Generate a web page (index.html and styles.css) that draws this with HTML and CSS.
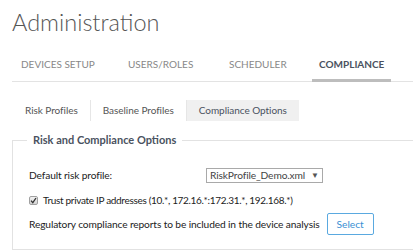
FILE: index.html
```html
<!DOCTYPE html>
<html lang="en">
<head>
    <meta charset="UTF-8">
    <title>Administration</title>
    <link rel="stylesheet" href="styles.css">
</head>
<body>
    <div class="page">
        <h1 class="page-title">Administration</h1>
        <div class="main-tabs">
            <span class="main-tab">DEVICES SETUP</span>
            <span class="main-tab">USERS/ROLES</span>
            <span class="main-tab">SCHEDULER</span>
            <span class="main-tab active">COMPLIANCE</span>
        </div>
        <div class="sub-tabs">
            <span class="sub-tab">Risk Profiles</span>
            <span class="sub-tab">Baseline Profiles</span>
            <span class="sub-tab active">Compliance Options</span>
        </div>
        <fieldset class="options">
            <legend>Risk and Compliance Options</legend>
            <div class="option-row profile-row">
                <span class="option-label">Default risk profile:</span>
                <span class="select-box">RiskProfile_Demo.xml <span class="caret">&#9660;</span></span>
            </div>
            <div class="option-row check-row">
                <span class="check-box">
                    <svg width="7" height="7" viewBox="0 0 7 7"><path d="M1 3.6 L2.8 5.6 L6 1" fill="none" stroke="#333" stroke-width="1.3"/></svg>
                </span>
                <span>Trust private IP addresses (10.*, 172.16.*:172.31.*, 192.168.*)</span>
            </div>
            <div class="option-row report-row">
                <span>Regulatory compliance reports to be included in the device analysis</span>
                <button class="btn-select">Select</button>
            </div>
        </fieldset>
    </div>
</body>
</html>
```

FILE: styles.css
```css
body {
    margin: 0;
    font-family: 'Lato', sans-serif;
    color: #222222;
    overflow: hidden;
    white-space: nowrap;
}
.page {
    padding-left: 12px;
}
.page-title {
    margin: 0;
    padding-top: 2px;
    font-size: 23.5px;
    font-weight: 300;
    line-height: 40px;
    color: #555555;
}
/* top level tabs */
.main-tabs {
    display: grid;
    grid-template-columns: 107px 101px 90px auto;
    padding-left: 9px;
    border-bottom: 1px solid #e3e3e3;
}
.main-tab {
    justify-self: start;
    padding: 12px 0 7px;
    font-size: 10px;
    line-height: 20px;
    color: #888888;
}
.main-tab.active {
    position: relative;
    font-weight: bold;
    color: #4a5260;
}
.main-tab.active::after {
    content: "";
    position: absolute;
    left: -7px;
    right: -7px;
    bottom: -1px;
    height: 3px;
    background: #bdbdbd;
}
/* second level tabs */
.sub-tabs {
    display: flex;
    margin-top: 18px;
    padding-left: 1px;
}
.sub-tab {
    padding: 0 12px 1px;
    font-size: 10px;
    letter-spacing: -0.05px;
    line-height: 20px;
    color: #555555;
    border-right: 1px solid #e6e6e6;
}
.sub-tab.active {
    border-right: none;
    background: #f0f0f0;
    color: #4a5260;
}
/* options box */
.options {
    margin: 12px 0 0;
    padding: 21px 0 14px 16px;
    border: 1px solid #e2e2e2;
    border-right: none;
}
.options legend {
    margin-left: -2px;
    padding: 0 6px;
    font-size: 11px;
    font-weight: bold;
    line-height: 14px;
    color: #4a5260;
}
.option-row {
    display: flex;
    align-items: center;
    font-size: 10.2px;
    letter-spacing: -0.12px;
}
.profile-row {
    height: 15px;
}
.option-label {
    width: 177px;
    padding-bottom: 2px;
}
.select-box {
    display: flex;
    gap: 6px;
    width: 109px;
    height: 13px;
    padding: 0 3px;
    border: 1px solid #a9a9a9;
    line-height: 13px;
    color: #444444;
}
.caret {
    font-size: 8px;
    color: #555555;
}
.check-row {
    height: 14px;
    margin-top: 10px;
    gap: 5px;
    font-size: 10px;
    letter-spacing: -0.32px;
}
.check-box {
    display: flex;
    align-items: center;
    justify-content: center;
    width: 7px;
    height: 7px;
    border: 1px solid #a0a0a0;
    border-radius: 2px;
    background: linear-gradient(#f2f2f2, #d4d4d4);
}
.report-row {
    height: 22px;
    margin-top: 6px;
}
.btn-select {
    height: 22px;
    margin-left: 7px;
    padding: 0 9px;
    font-family: 'Lato', sans-serif;
    font-size: 10.2px;
    color: #3a8fd3;
    background: #ffffff;
    border: 1px solid #5aa9e0;
    border-radius: 2px;
}
```
